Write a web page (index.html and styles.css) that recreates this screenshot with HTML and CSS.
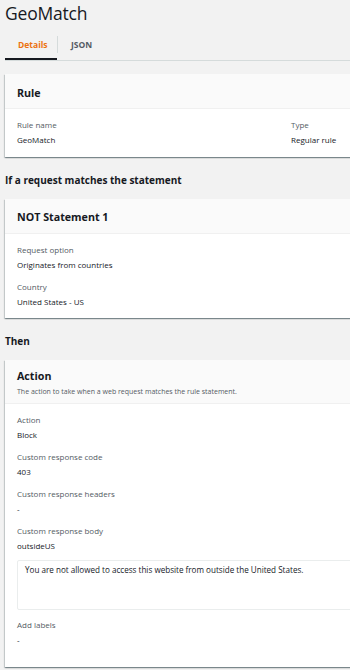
FILE: index.html
```html
<!DOCTYPE html>
<html>
<head>
<meta charset="utf-8">
<link rel="stylesheet" href="styles.css">
</head>
<body>
<div class="page">
  <h1 class="title">GeoMatch</h1>
  <div class="tabs">
    <div class="tab active">Details</div>
    <div class="tab-sep"></div>
    <div class="tab">JSON</div>
  </div>

  <section class="card card-first">
    <div class="card-head"><h2>Rule</h2></div>
    <div class="card-body cols">
      <div class="field">
        <div class="label">Rule name</div>
        <div class="value">GeoMatch</div>
      </div>
      <div class="field">
        <div class="label">Type</div>
        <div class="value">Regular rule</div>
      </div>
    </div>
  </section>

  <h3 class="section">If a request matches the statement</h3>

  <section class="card">
    <div class="card-head"><h2>NOT Statement 1</h2></div>
    <div class="card-body">
      <div class="field">
        <div class="label">Request option</div>
        <div class="value">Originates from countries</div>
      </div>
      <div class="field">
        <div class="label">Country</div>
        <div class="value">United States - US</div>
      </div>
    </div>
  </section>

  <h3 class="section">Then</h3>

  <section class="card card-action">
    <div class="card-head">
      <h2>Action</h2>
      <p class="desc">The action to take when a web request matches the rule statement.</p>
    </div>
    <div class="card-body">
      <div class="field">
        <div class="label">Action</div>
        <div class="value">Block</div>
      </div>
      <div class="field">
        <div class="label">Custom response code</div>
        <div class="value">403</div>
      </div>
      <div class="field">
        <div class="label">Custom response headers</div>
        <div class="value">-</div>
      </div>
      <div class="field">
        <div class="label">Custom response body</div>
        <div class="value">outsideUS</div>
        <div class="bodybox">You are not allowed to access this website from outside the United States.</div>
      </div>
      <div class="field">
        <div class="label">Add labels</div>
        <div class="value">-</div>
      </div>
    </div>
  </section>
</div>
</body>
</html>
```

FILE: styles.css
```css
html, body {
  margin: 0;
  padding: 0;
  background: #f2f2f2;
  overflow: hidden;
}
body {
  font-family: "Open Sans", "Noto Sans", sans-serif;
  color: #16191f;
  width: 350px;
  height: 670px;
}
.page {
  padding: 1px 0 0 5px;
  width: 380px;
}
.title {
  margin: 0;
  font-size: 17.5px;
  font-weight: 400;
  line-height: 24px;
  letter-spacing: -0.2px;
}
.tabs {
  display: flex;
  align-items: center;
  height: 31px;
  margin-top: 4px;
  border-bottom: 1px solid #d5dbdb;
}
.tab {
  font-size: 8.5px;
  font-weight: 700;
  color: #545b64;
  padding: 0 12px 0 13px;
  height: 31px;
  line-height: 31px;
  box-sizing: border-box;
}
.tab.active {
  color: #ec7211;
  border-bottom: 2px solid #16191f;
  width: 52px;
}
.tab-sep {
  width: 1px;
  height: 17px;
  background: #d5dbdb;
}
.card {
  background: #fff;
  margin-top: 12px;
  box-shadow: 0 1px 1px rgba(0,28,36,0.3), 1px 1px 1px rgba(0,28,36,0.15), -1px 1px 1px rgba(0,28,36,0.15);
}
.card-first {
  margin-top: 13px;
}
.card-head {
  background: #fafafa;
  padding: 8px 12px 6px;
  border-bottom: 1px solid #f0f0f0;
}
.card-first .card-head {
  padding: 9px 12px 5px;
}
.card-head h2 {
  margin: 0;
  font-size: 10.7px;
  font-weight: 700;
  line-height: 20px;
}
.card-action .card-head {
  padding: 6px 12px 6px;
}
.desc {
  margin: 1px 0 0;
  font-size: 7px;
  color: #545b64;
  line-height: 10px;
}
.card-body {
  padding: 8px 12px 9px;
}
.cols {
  padding-bottom: 10px;
}
.card-action .card-body {
  padding-bottom: 20px;
}
.cols {
  display: grid;
  grid-template-columns: 274px auto;
}
.field {
  margin-bottom: 7px;
}
.field:last-child,
.cols .field {
  margin-bottom: 0;
}
.label {
  font-size: 8px;
  color: #545b64;
  line-height: 15px;
}
.value {
  font-size: 8px;
  line-height: 15px;
  color: #16191f;
}
.bodybox {
  margin: 7px 0 3px;
  border: 1px solid #eaeded;
  border-radius: 2px;
  height: 50px;
  box-sizing: border-box;
  padding: 3px 7px;
  font-size: 8.1px;
  line-height: 12px;
}
.section {
  margin: 16px 0 0;
  font-size: 10px;
  font-weight: 700;
  line-height: 14px;
}
```
